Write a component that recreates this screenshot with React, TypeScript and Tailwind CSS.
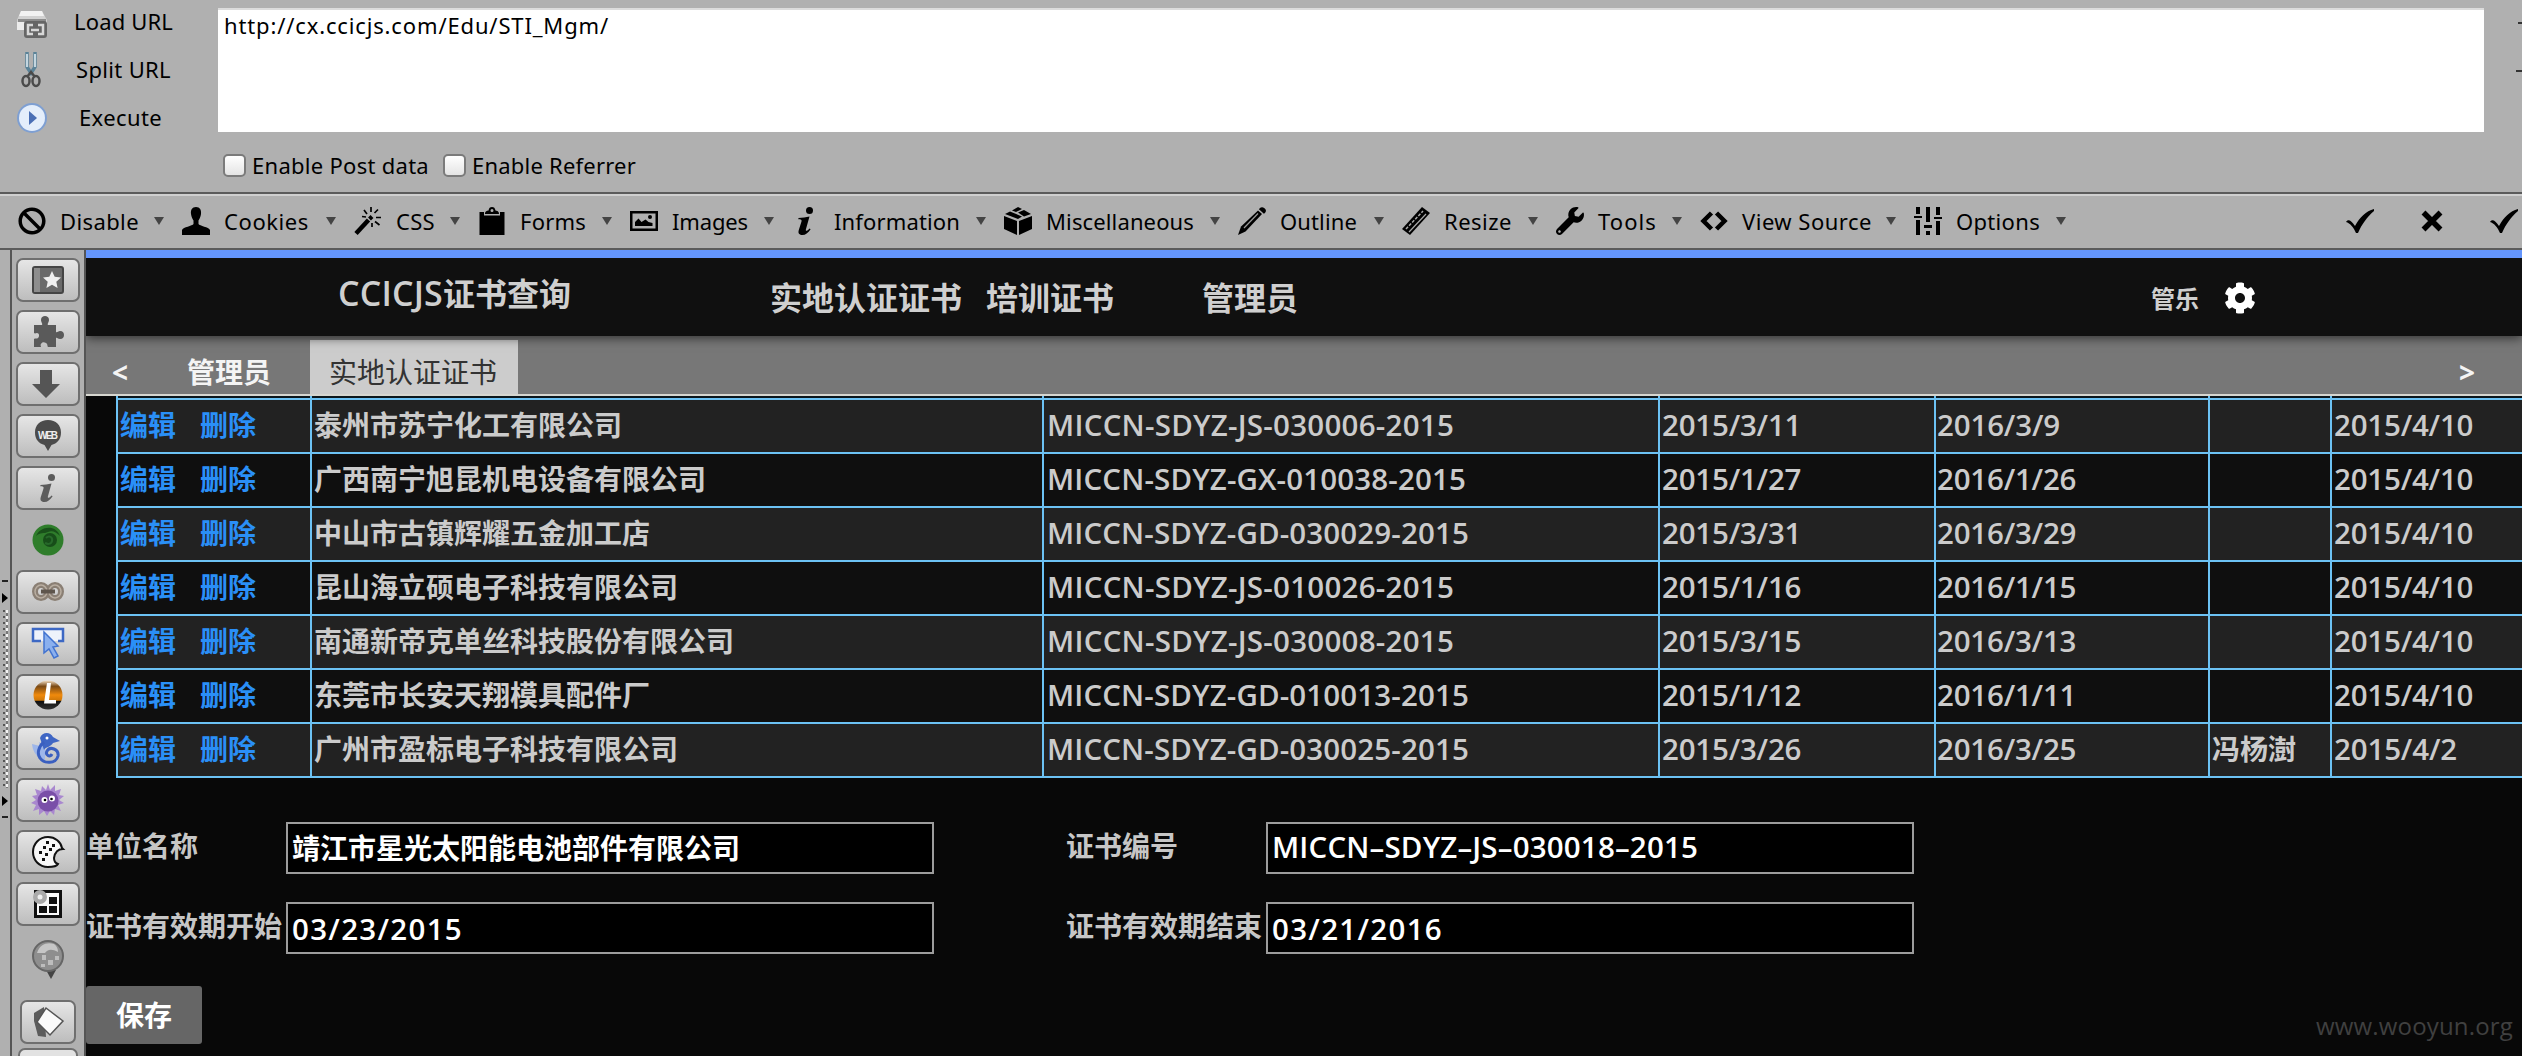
import { useLayoutEffect, useRef, useState } from "react";
import type { ReactNode } from "react";
import { FaBan, FaCog, FaWrench } from "react-icons/fa";

/** Text whose letter spacing is tuned so that it spans `w` pixels. */
function Fit({ w, children, className = "" }: { w: number; children: string; className?: string }) {
  const ref = useRef<HTMLSpanElement>(null);
  const [ls, setLs] = useState(0);
  useLayoutEffect(() => {
    const el = ref.current;
    if (!el) return;
    el.style.letterSpacing = "0px";
    const natural = el.getBoundingClientRect().width;
    const next = (w - natural) / children.length;
    el.style.letterSpacing = `${next}px`;
    setLs(next);
  }, [w, children]);
  return (
    <span ref={ref} style={{ letterSpacing: ls }} className={`inline-block whitespace-nowrap ${className}`}>
      {children}
    </span>
  );
}

const svg = "block h-7 w-7 shrink-0 overflow-visible";

const PersonIcon = () => (
  <svg viewBox="0 0 28 28" className={svg}>
    <path d="M14 0c4 0 5.500 3 5 7-.4 3-1.500 5-2.500 6.500V17c1 2 10.500 3 11.500 6v5H0v-5c1-3 10.500-4 11.500-6v-3.500C10.500 12 9.400 10 9 7c-.5-4 1-7 5-7z" />
  </svg>
);
const WandIcon = () => (
  <svg viewBox="0 0 28 28" className={svg} fill="none" stroke="#000">
    <path d="M2 26.500L14.500 13" strokeWidth="4.500" />
    <path d="M15.500 12l2.500-2.500" strokeWidth="4" />
    <path d="M10 3l3 4M17 0v5M24 2.500L20.500 6M22 10.500h5M21 14.500l4.500 3.500M18 16v4M8 9.500l4 .5" strokeWidth="1.700" />
  </svg>
);
const ClipIcon = () => (
  <svg viewBox="0 0 28 28" className={svg}>
    <path d="M1.500 5H6v3.500h16V5h4.500v23h-25z" />
    <path d="M7 7c0-3 2-3 3.500-3.500C11 1 12 0 14 0s3 1 3.500 3.500C19 4 21 4 21 7zM14 2a1.500 1.500 0 100 3 1.500 1.500 0 000-3z" fillRule="evenodd" />
  </svg>
);
const ImageIcon = () => (
  <svg viewBox="0 0 28 28" className={svg}>
    <path d="M0 4h28v20H0zM2.500 6.500v15h23v-15z" fillRule="evenodd" />
    <path d="M5 19v-4l3.500-3.500 3 3.500 4-2.500 3 2.500 4 1v3z" />
    <circle cx="20" cy="10" r="2" />
  </svg>
);
const InfoIcon = ({ className = "" }: { className?: string }) => (
  <svg viewBox="0 0 28 28" className={svg + " " + className}>
    <circle cx="17.500" cy="3.500" r="3.500" />
    <path d="M6.500 11c4-.4 7.500-1 11-1.600L14 22c-.8 2.500 1 2.400 3.600-.6l1 .8C16 26 13.500 28 10.500 28c-4 0-4.500-2.400-3.700-5L9.500 14.500c.5-2-.6-2.200-3.200-2.300z" />
  </svg>
);
const CubeIcon = () => (
  <svg viewBox="0 0 28 28" className={svg}>
    <path d="M0 9l13 5v14L0 22zM28 9l-13 5v14l13-6zM1 7l5-2.500 12 5L14 12zM8 3.500L14 0l4 2-6 3zM14 5.500L20 3l7 4-7 2.500z" />
  </svg>
);
const PencilIcon = () => (
  <svg viewBox="0 0 28 28" className={svg}>
    <path d="M0 28l3-8.500L20 3.500l4 3.500L7.500 24.500z" />
    <path d="M21.500 1.500C23 0 24.500-.3 26.500 1.200s1.800 3.300.4 4.700l-1 .8-5-4.400z" />
    <path d="M6 21L20 6.500" stroke="#999" strokeWidth="1.200" />
  </svg>
);
const RulerIcon = () => (
  <svg viewBox="0 0 28 28" className={svg}>
    <path d="M0 22L20 0l8 6L8 28z" />
    <path d="M4 22L21 4" stroke="#aaa" strokeWidth="1.500" strokeDasharray="3 1.500" />
    <path d="M7 25L24 7" stroke="#aaa" strokeWidth="1.200" />
  </svg>
);
const CodeIcon = () => (
  <svg viewBox="0 0 28 28" className={svg} fill="none" stroke="#000" strokeWidth="4.500">
    <path d="M11.500 6L3.500 14l8 8M16.500 6l8 8-8 8" />
  </svg>
);
const SlidersIcon = () => (
  <svg viewBox="0 0 28 28" className={svg}>
    <path d="M2 0h4v7H2zM0 9h8v2H0zM2 13h4v15H2zM12 0h4v15h-4zM10 18h8v3h-8zM12 24h4v4h-4zM22 0h4v8h-4zM20 10h8v2h-8zM22 14h4v14h-4z" />
  </svg>
);
const CheckIcon = () => (
  <svg viewBox="0 0 28 28" className={svg}>
    <path d="M0 15c2-3 5-2 9 4C14 10 20 4 28 2v2C21 10 16 17 12 26h-2C8 21 4 16 0 15z" />
  </svg>
);
const CrossIcon = () => (
  <svg viewBox="0 0 24 24" className="block h-6 w-6" stroke="#000" strokeWidth="5.500">
    <path d="M3.500 3.500l17 17M20.500 3.500l-17 17" />
  </svg>
);

const menu: { label: string; box: string; w: number; icon: ReactNode }[] = [
  { label: "Disable", box: "w-[164px]", w: 79, icon: <FaBan className={svg} /> },
  { label: "Cookies", box: "w-[172px]", w: 85, icon: <PersonIcon /> },
  { label: "CSS", box: "w-[124px]", w: 39, icon: <WandIcon /> },
  { label: "Forms", box: "w-[152px]", w: 66, icon: <ClipIcon /> },
  { label: "Images", box: "w-[162px]", w: 76, icon: <ImageIcon /> },
  { label: "Information", box: "w-[212px]", w: 126, icon: <InfoIcon /> },
  { label: "Miscellaneous", box: "w-[234px]", w: 148, icon: <CubeIcon /> },
  { label: "Outline", box: "w-[164px]", w: 77, icon: <PencilIcon /> },
  { label: "Resize", box: "w-[154px]", w: 68, icon: <RulerIcon /> },
  { label: "Tools", box: "w-[144px]", w: 59, icon: <FaWrench className={svg} /> },
  { label: "View Source", box: "w-[214px]", w: 130, icon: <CodeIcon /> },
  { label: "Options", box: "w-[170px]", w: 84, icon: <SlidersIcon /> },
];

function MenuBar() {
  return (
    <div className="flex h-[58px] items-center border-y-2 border-[#5b5b5b] bg-[#b0b0b0] pl-[18px] shadow-[inset_0_2px_0_#cfcfcf]">
      {menu.map((m) => (
        <div key={m.label} className={`flex shrink-0 items-center ${m.box}`}>
          {m.icon}
          <div className="ml-3.5 leading-[30px]">
            <Fit w={m.w}>{m.label}</Fit>
          </div>
          <svg viewBox="0 0 10 8" className="ml-auto mr-[18px] h-2 w-2.5 shrink-0" fill="#444">
            <path d="M0 0h10L5 8z" />
          </svg>
        </div>
      ))}
      <div className="ml-auto flex items-center pr-1">
        <CheckIcon />
        <div className="mx-[46px]">
          <CrossIcon />
        </div>
        <CheckIcon />
      </div>
    </div>
  );
}

const checkbox = "h-[23px] w-[23px] rounded-[5px] border-2 border-[#7b7b7b] bg-linear-to-b from-white to-[#e4e4e4]";

function UrlPanel() {
  return (
    <div className="flex h-48 bg-[#b0b0b0]">
      <div className="flex w-[218px] flex-col">
        <div className="flex h-12 items-center">
          <svg viewBox="0 0 32 30" className="ml-4 h-[30px] w-8">
            <path d="M5 2h21l5 9v8H1v-8z" fill="#d2d2d2" />
            <path d="M5 2h21l2 5H3z" fill="#f2f2f2" />
            <path d="M2 10h28v3H2z" fill="#8c8c8c" />
            <path d="M1 13h30v8H1z" fill="#ececec" />
            <rect x="8" y="12" width="23" height="17" rx="3" fill="#666" />
            <path d="M17 16h-5v9h5M22 16h5v9h-5M15 21h8" fill="none" stroke="#d8d8d8" strokeWidth="2.500" />
          </svg>
          <div className="-mt-1.5 ml-[26px]"><Fit w={99}>Load URL</Fit></div>
        </div>
        <div className="flex h-12 items-center">
          <svg viewBox="0 0 20 36" className="ml-[21px] mt-[-4px] h-9 w-5" fill="none">
            <path d="M6 0v15l4 6 4-6V0" stroke="#5b8398" strokeWidth="3.500" />
            <path d="M6 2v13M14 2v13" stroke="#e6f2f7" strokeWidth="1.500" />
            <ellipse cx="5" cy="29" rx="3.500" ry="5" stroke="#4a4a4a" strokeWidth="2.500" />
            <ellipse cx="15" cy="29" rx="3.500" ry="5" stroke="#4a4a4a" strokeWidth="2.500" />
            <path d="M6 25l4-5 4 5" stroke="#4a4a4a" strokeWidth="2.500" />
          </svg>
          <div className="-mt-1.5 ml-[35px]"><Fit w={95}>Split URL</Fit></div>
        </div>
        <div className="flex h-12 items-center">
          <svg viewBox="0 0 32 32" className="ml-4 mt-[-5px] h-8 w-8">
            <circle cx="16" cy="16" r="15" fill="#7e9fd2" />
            <circle cx="16" cy="16" r="13" fill="#e4eefb" />
            <path d="M13 9l8 7-8 7z" fill="#4a6fb5" />
          </svg>
          <div className="-mt-1.5 ml-[31px]"><Fit w={83}>Execute</Fit></div>
        </div>
      </div>
      <div className="flex w-[2266px] flex-col pt-2">
        <div className="h-[124px] border-t-2 border-[#dcdcdc] bg-white pl-[6px] leading-[30px]">
          <Fit w={385}>http://cx.ccicjs.com/Edu/STI_Mgm/</Fit>
        </div>
        <div className="mt-[18px] flex items-center pl-[5px] leading-[30px]">
          <span className={checkbox} />
          <div className="ml-[6px] w-[187px]"><Fit w={177}>Enable Post data</Fit></div>
          <span className={`ml-1 ${checkbox}`} />
          <div className="ml-[6px]"><Fit w={164}>Enable Referrer</Fit></div>
        </div>
      </div>
      <div className="flex flex-1 flex-col items-end pt-[22px]">
        <span className="h-0.5 w-1 bg-[#333]" />
        <span className="mt-[46px] h-0.5 w-1.5 bg-[#333]" />
      </div>
    </div>
  );
}

const icon = "block h-8 w-8 shrink-0 overflow-visible";

const sideTop: ReactNode[] = [
  <svg viewBox="0 0 32 32" className={icon}>
    <rect x="1" y="3" width="30" height="26" rx="2" fill="#6a6a6a" stroke="#454545" strokeWidth="2" />
    <path d="M2 4h6v24H2z" fill="#8d8d8d" />
    <path d="M20 7l2.700 5.800 6.300.7-4.700 4.300 1.300 6.200-5.600-3.200-5.600 3.200 1.300-6.200L11 13.500l6.300-.7z" fill="#f0f0f0" />
  </svg>,
  <svg viewBox="0 0 32 32" className={icon}>
    <path d="M2 9h8c1-1-1-3-1-5 0-3 2-4 4-4s4 1 4 4c0 2-2 4-1 5h8v7c1 1 2-1 4-1 3 0 4 2 4 4s-1 4-4 4c-2 0-3-2-4-1v9h-8c-1-1 0-3-2-4-2-1-4-1-5 1-1 1 0 2 0 3H2v-8c1-1 3 0 4-1 2-2 1-5-1-5-1 0-2 1-3 0z" fill="#5a5a5a" />
  </svg>,
  <svg viewBox="0 0 32 32" className={icon}>
    <path d="M8 2h12v14h8L14 30 0 16h8z" fill="#555" />
  </svg>,
  <svg viewBox="0 0 32 32" className={icon}>
    <path d="M16 0c8 0 13 5 13 12.500 0 7-4 11-9.500 12.500L16 31l-3.500-6C7 23.500 3 19.500 3 12.500 3 5 8 0 16 0z" fill="#4b4b4b" />
    <text x="16" y="19" textAnchor="middle" textLength="20" fontSize="10" fontWeight="700" fontFamily="Liberation Sans, sans-serif" fill="#eee">WEB</text>
  </svg>,
  <InfoIcon className="fill-[#5c5c5c]" />,
];

const sideBottom: ReactNode[] = [
  <svg viewBox="0 0 32 32" className={icon} fill="none" stroke="#8a7f74" strokeWidth="6">
    <ellipse cx="9" cy="15.500" rx="6" ry="6.500" /><ellipse cx="23" cy="15.500" rx="6" ry="6.500" />
    <ellipse cx="9" cy="15.500" rx="6" ry="6.500" stroke="#b9aea1" strokeWidth="1.500" />
    <ellipse cx="23" cy="15.500" rx="6" ry="6.500" stroke="#b9aea1" strokeWidth="1.500" />
    <path d="M9 15.500h14" stroke="#5e554c" strokeWidth="4" />
  </svg>,
  <svg viewBox="0 0 32 32" className={icon}>
    <path d="M9 13H1V1h30v12h-5" fill="#eef2fb" stroke="#3d68c4" strokeWidth="2.500" />
    <path d="M12 4l14 14-5 1 5 9-4 2-5-9-5 4z" fill="#8bb0ee" stroke="#4273d0" strokeWidth="1.500" />
  </svg>,
  <svg viewBox="0 0 32 32" className={icon}>
    <defs>
      <linearGradient id="orb" x1="0" y1="0" x2="0" y2="1">
        <stop offset="0" stopColor="#f5e2c8" /><stop offset=".2" stopColor="#7a4a16" /><stop offset=".5" stopColor="#f08a0c" /><stop offset=".68" stopColor="#d07808" /><stop offset=".72" stopColor="#111" /><stop offset="1" stopColor="#333" />
      </linearGradient>
    </defs>
    <circle cx="16" cy="15" r="14.500" fill="url(#orb)" />
    <path d="M15 3h4l-2 17h7v3.500H12z" fill="#fff" />
  </svg>,
  <svg viewBox="0 0 32 32" className={icon} fill="none">
    <path d="M0 12l8 2-1-4 6 4v14C6 27 1 21 0 12z" fill="#9db6ea" />
    <path d="M8 6c2-6 10-7 13-1l7 4-7 2c-2 4-8 4-9 7" fill="#3f66c4" />
    <path d="M12 10c-6 5-7 12-4 16 4 6 16 6 18-2 1-7-8-10-11-5-2 4 3 7 5 3" stroke="#3a5fc0" strokeWidth="3" />
    <circle cx="15" cy="6" r="1.500" fill="#fff" />
  </svg>,
  <svg viewBox="0 0 32 32" className={icon}>
    <path d="M16 0l2 6 5-5 0 6 6-2-2 6 5 1-5 4 5 3-6 2 3 6-6-2-1 6-4-4-3 5-3-5-5 4 0-6-6 2 3-6-5-2 5-3-4-4 5-1-2-6 6 2 1-5 4 4z" fill="#a987cf" />
    <circle cx="16" cy="17" r="10.500" fill="#7a4fa8" />
    <circle cx="12.500" cy="16" r="3" fill="#fff" /><circle cx="20" cy="14.500" r="3" fill="#fff" />
    <circle cx="13" cy="16" r="1.300" /><circle cx="19.500" cy="15" r="1.300" />
  </svg>,
  <svg viewBox="0 0 32 32" className={icon}>
    <path d="M30 12c-1-6-7-11-14-11C7 1 1 8 1 16s6 15 15 15c4 0 9-1 10-3-3-1-4-4-4-6 1-6 4-9 9-9z" fill="#f8f8f8" stroke="#111" strokeWidth="2" />
    <path d="M14 5h3v3h-3zM20 8h3v3h-3zM11 10h3v3h-3zM17 12h3v3h-3zM7 15h3v3H7zM13 17h3v3h-3zM10 22h3v3h-3z" fill="#111" />
  </svg>,
  <svg viewBox="0 0 32 32" className={icon}>
    <path d="M2 2h28v28H2z" fill="#111" />
    <path d="M5 5h22v22H5z" fill="#fafafa" />
    <path d="M17 9h8v7h-8zM7 18h8v7H7zM17 18h8v7h-8z" fill="#111" />
    <circle cx="8" cy="9" r="7" fill="#aaa" /><circle cx="8" cy="9" r="2.500" fill="#eee" />
  </svg>,
];

function SideButton({ children }: { children: ReactNode }) {
  return (
    <div className="mb-2 flex h-11 w-16 shrink-0 items-center justify-center rounded-[7px] border-2 border-[#6f6f6f] bg-linear-to-b from-[#e6e6e6] to-[#bdbdbd]">
      {children}
    </div>
  );
}

function Splitter() {
  return (
    <div className="flex w-2.5 shrink-0 flex-col items-center bg-[#b0b0b0] pt-[330px]">
      <span className="h-0.5 w-1.5 bg-[#222]" />
      <svg viewBox="0 0 6 10" className="mt-[11px] h-2.5 w-1.5"><path d="M0 0l6 5-6 5z" /></svg>
      <div className="mt-[7px] flex h-[178px] gap-px">
        <span className="w-0.5 bg-[repeating-linear-gradient(#555_0_2px,#b0b0b0_2px_6px)]" />
        <span className="w-0.5 bg-[repeating-linear-gradient(#f4f4f4_0_3px,#777_3px_6px)]" />
      </div>
      <svg viewBox="0 0 6 10" className="mt-2 h-2.5 w-1.5"><path d="M0 0l6 5-6 5z" /></svg>
      <span className="mt-[10px] h-0.5 w-1.5 bg-[#222]" />
    </div>
  );
}

function Sidebar() {
  return (
    <div className="flex w-[76px] shrink-0 flex-col items-center border-x-2 border-[#555] bg-[#b0b0b0] pt-2">
      {sideTop.map((c, i) => (
        <SideButton key={i}>{c}</SideButton>
      ))}
      <div className="mb-2 flex h-11 shrink-0 items-center">
        <svg viewBox="0 0 32 32" className={icon}>
          <circle cx="16" cy="16" r="15.500" fill="#2f7d2b" />
          <path d="M4 12C8 2 24 0 28 12c-4-4-8-6-12-4s-8 0-12 4z" fill="#19501a" />
          <circle cx="18" cy="16" r="7" fill="#174d19" />
          <path d="M14 14c3-3 7-1 6 3s-5 3-7 2" stroke="#27692a" strokeWidth="2" fill="none" />
        </svg>
      </div>
      {sideBottom.map((c, i) => (
        <SideButton key={i}>{c}</SideButton>
      ))}
      <svg viewBox="0 0 32 40" className="mt-1.5 block h-10 w-8 shrink-0">
        <path d="M14 30h10l-5 9z" fill="#444" />
        <circle cx="16" cy="16" r="15" fill="#8e8e8e" stroke="#666" strokeWidth="2" />
        <path d="M5 13c3-9 10-11 17-9 3 2 4 5 4 8-7-4-11-2-13 1z" fill="#c6c6c6" />
        <path d="M10 15h4v5h-4zM16 20h5v5h-5zM9 24h4v3H9zM23 16h4v4h-4z" fill="#bdbdbd" />
      </svg>
      <div className="mt-5 flex h-11 w-14 shrink-0 items-center justify-center rounded-[7px] border-2 border-[#6f6f6f] bg-linear-to-b from-[#e6e6e6] to-[#bdbdbd]">
        <svg viewBox="0 0 32 32" className={icon}>
          <path d="M12 1L2 7v8l4 15 8 1z" fill="#5c5c5c" />
          <path d="M14 2l17 13-13 14L5 16z" fill="#fafafa" stroke="#555" strokeWidth="1.500" />
        </svg>
      </div>
      <div className="mt-1 h-11 w-[60px] shrink-0 rounded-[7px] border-2 border-[#6f6f6f] bg-[#e2e2e2]" />
    </div>
  );
}

const rows: [string, string, string, string, string, string][] = [
  ["泰州市苏宁化工有限公司", "MICCN-SDYZ-JS-030006-2015", "2015/3/11", "2016/3/9", "", "2015/4/10"],
  ["广西南宁旭昆机电设备有限公司", "MICCN-SDYZ-GX-010038-2015", "2015/1/27", "2016/1/26", "", "2015/4/10"],
  ["中山市古镇辉耀五金加工店", "MICCN-SDYZ-GD-030029-2015", "2015/3/31", "2016/3/29", "", "2015/4/10"],
  ["昆山海立硕电子科技有限公司", "MICCN-SDYZ-JS-010026-2015", "2015/1/16", "2016/1/15", "", "2015/4/10"],
  ["南通新帝克单丝科技股份有限公司", "MICCN-SDYZ-JS-030008-2015", "2015/3/15", "2016/3/13", "", "2015/4/10"],
  ["东莞市长安天翔模具配件厂", "MICCN-SDYZ-GD-010013-2015", "2015/1/12", "2016/1/11", "", "2015/4/10"],
  ["广州市盈标电子科技有限公司", "MICCN-SDYZ-GD-030025-2015", "2015/3/26", "2016/3/25", "冯杨澍", "2015/4/2"],
];

const dateWidth = (s: string) => s.replace(/\//g, "").length * 16.2 + 2 * 12.4 + 1;
const codeWidth = (s: string) => (s.includes("JS") ? 407 : s.includes("GX") ? 419 : 422);

const cell = "flex items-center border-r-2 border-[#6cc2f4] pb-0.5";
const latin = "text-[29.5px]";
const cols = "grid w-[2600px] grid-cols-[194px_732px_616px_276px_274px_122px_386px]";

function CertTable() {
  return (
    <div className="ml-[30px] w-[2406px] overflow-hidden border-l-2 border-[#6cc2f4] text-[#cbcbcb]">
      <div className={`${cols} h-0.5 bg-[#0b161c]`}>
        {[0, 1, 2, 3, 4, 5, 6].map((i) => <span key={i} className="border-r-2 border-[#6cc2f4]" />)}
      </div>
      <div className="h-0.5 bg-[#6cc2f4]" />
      {rows.map((r, i) => (
        <div key={r[1]} className={`${cols} h-[54px] border-b-2 border-[#6cc2f4] ${i % 2 ? "bg-[#0f0f0f]" : "bg-[#222]"}`}>
          <div className={`${cell} pl-0.5 text-[#2a8ff7]`}>
            <a className="mr-6">编辑</a>
            <a>删除</a>
          </div>
          <div className={`${cell} pl-0.5`}>{r[0]}</div>
          <div className={`${cell} pl-[3px]`}><Fit className={latin} w={codeWidth(r[1])}>{r[1]}</Fit></div>
          <div className={`${cell} pl-0.5`}><Fit className={latin} w={dateWidth(r[2])}>{r[2]}</Fit></div>
          <div className={`${cell} pl-px`}><Fit className={latin} w={dateWidth(r[3])}>{r[3]}</Fit></div>
          <div className={`${cell} pl-0.5`}>{r[4]}</div>
          <div className={`${cell} pl-0.5`}><Fit className={latin} w={dateWidth(r[5])}>{r[5]}</Fit></div>
        </div>
      ))}
    </div>
  );
}

function Field({ label, value, w, box, font }: { label: string; value: string; w: number; box: string; font?: string }) {
  return (
    <div className="flex w-[980px] items-center">
      <label className="w-[200px] shrink-0 whitespace-nowrap pb-1 text-[#c6c6c6]">{label}</label>
      <div className={`flex h-[52px] w-[648px] items-center border-2 border-[#9c9c9c] bg-black pl-1 text-white ${box}`}>
        <Fit className={font} w={w}>{value}</Fit>
      </div>
    </div>
  );
}

export default function App() {
  return (
    <div className="flex h-[1056px] w-[2522px] flex-col overflow-hidden bg-[#b0b0b0] font-['Noto_Sans',sans-serif] text-[22px] text-black">
      <UrlPanel />
      <MenuBar />
      <div className="flex min-h-0 flex-1">
        <Splitter />
        <Sidebar />
        <main className="flex min-w-0 flex-1 flex-col overflow-hidden border-t-8 border-[#6495fc] bg-[#080808] font-['Open_Sans','Noto_Sans_CJK_SC',sans-serif] text-[28px] leading-[40px] font-semibold">
          <header className="z-10 flex h-[78px] shrink-0 items-center bg-[#101010] text-[32px] text-[#cfcfcf] shadow-[0_2px_10px_rgba(0,0,0,0.6)]">
            <div className="ml-[252px] w-[432px] pb-2"><Fit className="text-[34px]" w={105}>CCICJS</Fit>证书查询</div>
            <div className="w-[216px] pt-0.5">实地认证证书</div>
            <div className="w-[216px] pt-0.5">培训证书</div>
            <div className="w-[949px] pt-0.5">管理员</div>
            <div className="w-[73px] pt-1 text-2xl">管乐</div>
            <FaCog className="mt-px h-8 w-8 text-white" />
          </header>
          <nav className="flex h-[60px] shrink-0 border-b-2 border-[#d6d6d0] bg-[#777] text-[#f4f4f4]">
            <div className="w-[101px] pl-[26px] pt-4 text-[28px] leading-[40px] font-bold">&lt;</div>
            <div className="w-[123px] pt-4">管理员</div>
            <div className="mt-1 w-52 bg-[#ccc] pl-[19px] pt-3 font-normal text-[#333]">实地认证证书</div>
            <div className="ml-auto pr-[47px] pt-4 text-[28px] leading-[40px] font-bold">&gt;</div>
          </nav>
          <CertTable />
          <div className="mt-11 flex">
            <Field label="单位名称" value="靖江市星光太阳能电池部件有限公司" w={448} box="" />
            <Field label="证书编号" value="MICCN–SDYZ–JS–030018–2015" w={426} box="pb-0.5" font={latin} />
          </div>
          <div className="mt-7 flex">
            <Field label="证书有效期开始" value="03/23/2015" w={171} box="pt-0.5" font={latin} />
            <Field label="证书有效期结束" value="03/21/2016" w={171} box="pt-0.5" font={latin} />
          </div>
          <div className="mt-8 flex items-start justify-between">
            <button className="h-[58px] w-[116px] rounded-[3px] bg-[#666] text-white">保存</button>
            <div className="pr-[9px] pt-5 text-2xl leading-[40px] font-normal text-[#404040]"><Fit w={197}>www.wooyun.org</Fit></div>
          </div>
        </main>
      </div>
    </div>
  );
}
